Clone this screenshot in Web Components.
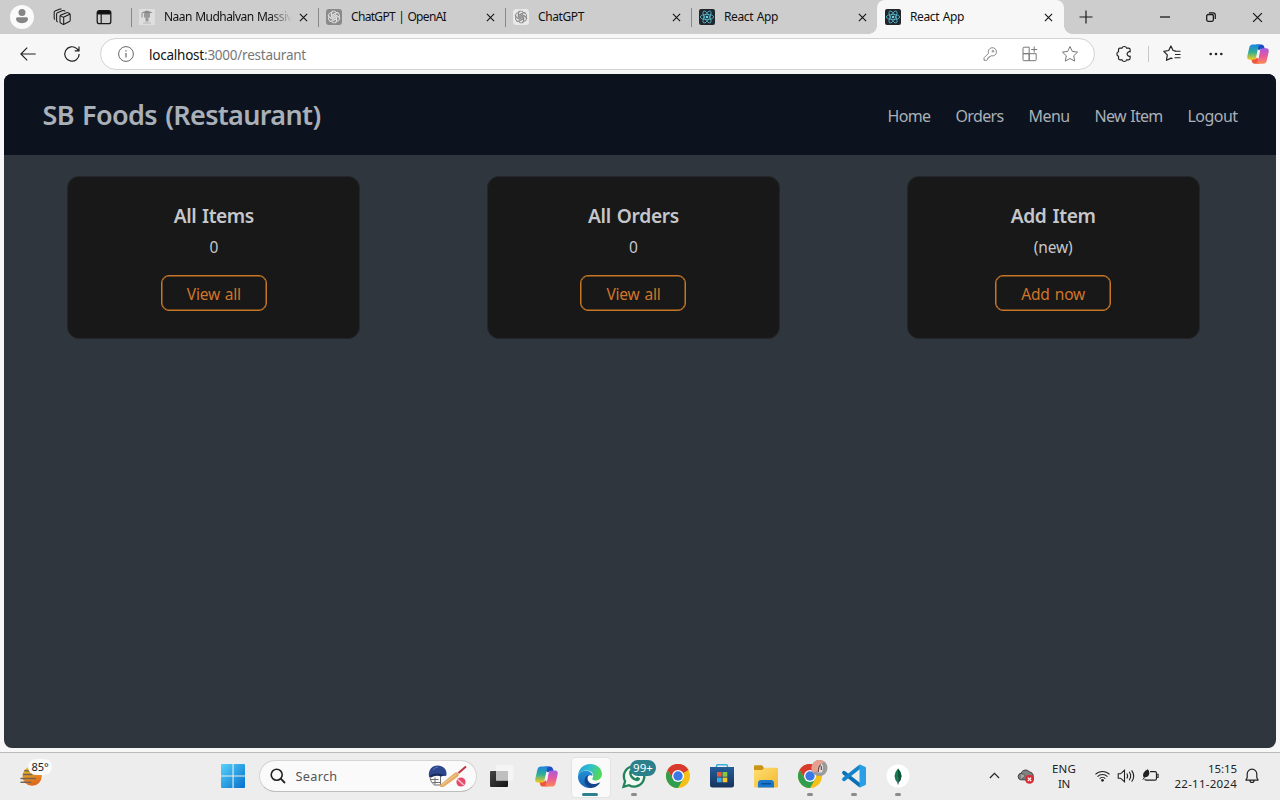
<!DOCTYPE html>
<html lang="en">
<head>
<meta charset="utf-8">
<title>React App</title>
<style>
html,body{margin:0;height:100%;overflow:hidden}
body{font-family:"Noto Sans","Open Sans",sans-serif;color:#1b1b1b;background:#f7f7f7}
</style>
</head>
<body>
<desktop-screen></desktop-screen>
<script>
const define = (name, css, html, after) => customElements.define(name, class extends HTMLElement {
  connectedCallback() {
    if (this.shadowRoot) return;
    const root = this.attachShadow({ mode: 'open' });
    root.innerHTML = `<style>*{box-sizing:border-box}${css}</style>` + (typeof html === 'function' ? html(this) : html);
    if (after) after(this, root);
  }
});

const chromeWheel = `<circle cx="12" cy="12" r="12" fill="#f5c018"/><path d="M12 12 1.6 6A12 12 0 0 1 22.4 6z" fill="#d93a2e"/><path d="M12 6h10.4A12 12 0 0 0 1.6 6L6.8 15z" fill="#d93a2e"/><path d="M1.6 6A12 12 0 0 0 12 24l5.2-9L12 12 6.8 15z" fill="#2f9e4f"/><circle cx="12" cy="12" r="6" fill="#fff"/><circle cx="12" cy="12" r="4.7" fill="#3b78e7"/>`;
const knot = c => `<g fill="none" stroke="${c}" stroke-width=".9">${[0,60,120,180,240,300].map(a=>`<path transform="rotate(${a} 8 8)" d="M5.300 8.600V4.800a2.800 2.800 0 0 1 5-1.600M6.900 9V5.700L10 3.900a2.800 2.800 0 0 1 2.600 0"/>`).join('')}</g>`;
const copilot = `<defs><linearGradient id="ca" x1="0" y1="0" x2="0" y2="1"><stop offset="0" stop-color="#1a86e0"/><stop offset=".5" stop-color="#2fae98"/><stop offset="1" stop-color="#f5cc1c"/></linearGradient><linearGradient id="cb" x1="0" y1="0" x2="0" y2="1"><stop offset="0" stop-color="#a65be0"/><stop offset=".5" stop-color="#e8589c"/><stop offset="1" stop-color="#fb8a55"/></linearGradient></defs>
<path d="M10 1.500h5.500c2 0 2.800 1 3.200 2.500l.8 2.500H16c-1.700 0-2.600 1-3 2.500z" fill="#1d4fc4"/>
<path d="M14 22.500H8.500c-2 0-2.800-1-3.200-2.500l-.8-2.500H8c1.700 0 2.600-1 3-2.500z" fill="#f0563c"/>
<path d="M6.500 1.500h8c-1.300.4-1.900 1.500-2.200 3.200L10 15.300c-.5 2.200-1.600 3-3.600 3H3.200C.9 18.300-.1 16.900.3 14.500L2.500 5C3 2.600 4.200 1.500 6.500 1.500z" fill="url(#ca)"/>
<path d="M17.500 22.500h-8c1.300-.4 1.900-1.500 2.200-3.200L14 8.700c.5-2.200 1.600-3 3.600-3h3.200c2.300 0 3.300 1.400 2.900 3.800L21.500 19c-.5 2.400-1.700 3.500-4 3.500z" fill="url(#cb)"/>
<path d="m13 8.500-1.300 7" stroke="#f7f2f5" stroke-width="2.200" stroke-linecap="round"/>`;
/* name: [viewBox width, viewBox height, markup]; drawn with currentColor strokes unless filled */
const ICONS = {
  profile: [24,24,`<g stroke="none"><circle cx="12" cy="12" r="12" fill="#fafafa"/><circle cx="12" cy="7.500" r="3.500" fill="#858585"/><path d="M6 13.800c0-1 .8-1.600 1.600-1.600h8.800c.8 0 1.600.6 1.600 1.600 0 2.800-2.600 4.400-6 4.400s-6-1.600-6-4.400z" fill="#858585"/></g>`],
  spaces: [18,18,`<path d="M7 8.300q0-1 .9-1.400l5.800-2.200q.9-.3 1.700.2l1 .6q.8.500.8 1.400v5.300q0 .9-.8 1.300l-5.300 2.700q-.8.400-1.600-.1L7.700 15q-.7-.5-.7-1.300zM7.200 7.600l2.900 1.500q.6.400.6 1v6M10.500 9.200l6.200-2.900M4.800 14l-.6-.4q-.6-.4-.6-1.200V6q0-.9.9-1.300l5.300-2.100q.9-.3 1.600.2l.9.600M2 11.500q-.8-.4-.8-1.300V4.300q0-.9.9-1.300L7 1.100q.8-.3 1.500.1" stroke-width="1.050"/>`],
  panel: [16,16,`<rect x="1.200" y="1.600" width="13.600" height="13" rx="2.200" stroke-width="1.300"/><path d="M1.500 5V3.700q0-2 2-2h9q2 0 2 2V5z" fill="#111"/><path d="M5.200 5v9.500" stroke-width="1.200"/>`],
  close: [10,10,`<path d="m1 1 8 8M9 1 1 9" stroke-width="1.200"/>`],
  plus: [14,14,`<path d="M7 .5v13M.5 7h13" stroke-width="1.200"/>`],
  min: [10,10,`<path d="M0 5h10" stroke-width="1.300"/>`],
  restore: [10,10,`<rect x=".7" y="2.500" width="6.700" height="6.800" rx="1.500" stroke-width="1.300"/><path d="M3 .8h4q2.300 0 2.300 2.300V7" stroke-width="1.200"/>`],
  back: [16,14,`<path d="M7.200.7.900 7l6.300 6.300M1 7h14.700" stroke-width="1.200"/>`],
  reload: [16,16,`<path d="M15.200 8A7.200 7.200 0 1 1 12.800 2.600L14.600 4.500M15 .5v4.300h-4.300" stroke-width="1.200"/>`],
  info: [16,16,`<circle cx="8" cy="8" r="7.400"/><path d="M8 7v4.500M8 4.200v1.300" stroke-width="1.200"/>`],
  key: [16,16,`<path d="M6.300 7.200A4.700 4.700 0 1 1 9.300 10L8 11.200H6.800v1.400H5.400V14l-1 1.200H1.200v-2.900z"/><circle cx="11.400" cy="4.900" r="1"/>`],
  apps: [16,16,`<path d="M1 2.200q0-1 1-1h5.200v6.500H1zM1 7.700h6.200v7H2q-1 0-1-1zM7.200 7.700h7v6q0 1-1 1h-6zM12.200.5v6M9.200 3.500h6"/>`],
  star: [18,18,`<path d="m9 1.500 2.300 4.900 5.300.7-3.900 3.700 1 5.300L9 13.500l-4.700 2.600 1-5.300L1.400 7.100l5.300-.7z" stroke-linejoin="round"/>`],
  puzzle: [18,18,`<path d="M7 3.200a2.400 2.400 0 0 1 4.600 0h2q1.500 0 1.500 1.500v2.100a2.300 2.300 0 1 0 0 4.400v2.100q0 1.500-1.500 1.500h-2a2.400 2.400 0 0 1-4.600 0H5q-1.500 0-1.500-1.500v-2.100a2.300 2.300 0 0 1 0-4.400V4.700Q3.500 3.200 5 3.200z" stroke-width="1.200"/>`],
  favs: [18,18,`<path d="M11.500 6.300h6M12 9.500h5.500M11.500 12.700h6" stroke-width="1.100"/><path d="m12.500 5.900-2.400-.4L7.900 1 5.700 5.500l-4.900.8 3.500 3.600-.8 5.400 4.600-2.200 1.400.5" stroke-width="1.200" stroke-linejoin="round"/>`],
  dots: [14,4,`<g fill="#222" stroke="none"><circle cx="1.700" cy="2" r="1.300"/><circle cx="7" cy="2" r="1.300"/><circle cx="12.300" cy="2" r="1.300"/></g>`],
  react: [16,16,`<rect width="16" height="16" rx="2" fill="#20262c" stroke="none"/><g stroke="#56bdd4" stroke-width=".8"><ellipse cx="8" cy="8" rx="6.700" ry="2.600"/><ellipse cx="8" cy="8" rx="6.700" ry="2.600" transform="rotate(60 8 8)"/><ellipse cx="8" cy="8" rx="6.700" ry="2.600" transform="rotate(120 8 8)"/></g><circle cx="8" cy="8" r="1.300" fill="#6fd4e8" stroke="none"/>`],
  gptdark: [16,16,`<rect width="16" height="16" rx="3" fill="#8a8a8a" stroke="none"/>${knot('#e3e3e3')}`],
  gptlight: [16,16,`<rect width="16" height="16" rx="3" fill="#e9e9e9" stroke="none"/>${knot('#858585')}`],
  grad: [16,16,`<rect width="16" height="16" fill="#dedede" stroke="none"/><path d="m2.500 3.500 5.500-2 5.500 2L8 5.300z" fill="#8a8a8a" stroke="none"/><path d="M5 4.500h6v4H9.500v4h-3v-4H5z" fill="#9a9a9a" stroke="none"/><path d="M3 4v4.500" stroke="#8f8f8f"/><path d="M4 14h8" stroke="#b4b4b4"/>`],
  copilot: [24,24,`<g stroke="none">${copilot}</g>`],
  weather: [32,28,`<defs><linearGradient id="w" x1="0" y1="0" x2=".3" y2="1"><stop offset="0" stop-color="#e8c52a"/><stop offset="1" stop-color="#df681c"/></linearGradient></defs><circle cx="12.500" cy="14.500" r="10" fill="url(#w)" stroke="none"/><path d="M4.500 9h8M3 13h10M.5 17h16M.5 21h11" stroke="#746454" stroke-width="1.500"/>`],
  windows: [24,24,`<defs><linearGradient id="g" x1="0" y1="0" x2="1" y2="1"><stop offset="0" stop-color="#55d2fb"/><stop offset="1" stop-color="#0570cc"/></linearGradient></defs><path d="M1 0h10.500v11.500H0V1q0-1 1-1zM12.600 0H23q1 0 1 1v10.500H12.600zM0 12.600h11.500V24H1q-1 0-1-1zM12.600 12.600H24V23q0 1-1 1H12.600z" fill="url(#g)" stroke="none"/>`],
  search: [16,16,`<circle cx="6.700" cy="6.700" r="5.500" stroke-width="1.600"/><path d="m10.700 10.700 4.300 4.300" stroke-width="1.800"/>`],
  cricket: [40,24,`<path d="M2 12q0 6 4.500 9h6v-9M2.500 15.500h8M4.500 18.500h8M7 13.500v7" stroke="#6f6f70" stroke-width="1"/><g stroke="none"><path d="M1 12.500C0 6 4 1.500 9.500 1.500S19 5 18.500 10.500q0 2-2 1.500L8 10.500q-3 0-5 2z" fill="#2d478d"/><path d="M1 12.500q3.500-3.700 9-3l6.500 1.500-3 1.500q-6-2-10.500 1z" fill="#1a2b60"/></g><path d="M5 6q2-3 5-3" stroke="#5d78b6"/><path d="m12.500 20.500 14-11.500q3-1.500 4 .5t-1 3.500l-14 10q-5 .5-3-2.500z" fill="#e5ac66" stroke="none"/><path d="m14 21 14-10.500" stroke="#f4cf98"/><path d="m30.500 9 7.500-6.500" stroke="#bf3342" stroke-width="2"/><circle cx="33" cy="18" r="4.600" fill="#e34b6d" stroke="none"/><path d="m29.800 15.500 6 5.500" stroke="#f6c0cd" stroke-width="1.600"/>`],
  taskview: [24,24,`<defs><linearGradient id="tv" x1="0" y1="0" x2="1" y2="1"><stop offset="0" stop-color="#454545"/><stop offset="1" stop-color="#141414"/></linearGradient></defs><g stroke="none"><rect y="7" width="18" height="16" rx="1" fill="url(#tv)"/><rect x="6" y="1" width="17.500" height="15.500" rx="1" fill="#f5f5f5" opacity=".9"/><path d="M6 7h12v9.500H6z" fill="#bfbfbf"/></g>`],
  edge: [24,24,`<defs><linearGradient id="e1" x1="0" y1="0" x2="1" y2=".35"><stop offset="0" stop-color="#2398d9"/><stop offset=".5" stop-color="#2dbfd0"/><stop offset="1" stop-color="#55d759"/></linearGradient><linearGradient id="e2" x1="0" y1="0" x2="0" y2="1"><stop offset="0" stop-color="#2291d6"/><stop offset="1" stop-color="#1761b7"/></linearGradient></defs><g stroke="none"><path d="M0 11.500C.5 5 5.500 0 12 0c7 0 12 4.800 12 10 0 4-3.200 6.500-6.500 6.500-2.500 0-3.800-1-3-2.200C17 10 13 6.500 8.500 6.500 4.500 6.500 1 8.500 0 11.500z" fill="url(#e1)"/><path d="M0 12C.8 8.500 4.500 6.700 8.300 6.800c4 .1 6.200 2.700 6.200 4.900-3-1.500-6.500.3-6.500 4.200 0 4 3.500 7 7 7.700C8 25.500-.5 20.500 0 12z" fill="url(#e2)"/><path d="M11 10.800c-3.200 3-1 9.700 5.500 9.200 2.500-.2 4-.8 5.800-1.700-1.500 3-5.300 5.700-9.300 5.700-5-1-7.500-5.500-6-9.500.7-2 2.200-3.500 4-3.700z" fill="#12458b"/></g>`],
  whatsapp: [24,24,`<path d="m1.500 22.800 1.600-5.600A10.200 10.200 0 1 1 7 21.200z" stroke="#23835a" stroke-width="2.300" fill="#f3f8f5"/><path d="M7.600 6.500c1-1 2-.5 2.400.6l.5 1.600c.1.600-.8 1.200-1 1.600.9 1.900 2.300 3 4.200 3.900l1.500-1.500 2.600 1.300c.6.400 0 2.200-1.100 2.800-5 2-11.500-5.400-9.100-10.300z" fill="#23835a" stroke="none"/>`],
  chrome: [24,24,`<g stroke="none">${chromeWheel}</g>`],
  chromeuser: [32,28,`<g stroke="none" transform="translate(0 4)">${chromeWheel}</g><g stroke="none"><circle cx="21.500" cy="8" r="8" fill="#9a9a9a"/><path d="M21.500 0a8 8 0 0 0-6.500 12.500l5-1.500 1-5.500 5.500-4q-2-1.500-5-1.500z" fill="#e7a08e"/><path d="M19.500 12.500q-.5-7.500 3.500-9 3.500 2 1 9z" fill="#e5dedd"/></g><path d="M20.300 12q0-6 2.500-7.500M23.300 6v4" stroke="#6b4444" stroke-width="1.200"/>`],
  store: [24,24,`<defs><linearGradient id="st" x1="0" y1="0" x2="0" y2="1"><stop offset="0" stop-color="#235e99"/><stop offset="1" stop-color="#17335c"/></linearGradient></defs><path d="M6.500 4V2q0-1.300 1.300-1.300h8.400q1.300 0 1.300 1.300v2" stroke="#3aaddd" stroke-width="1.500"/><path d="M0 3h24v18q0 2.500-2.500 2.500h-19Q0 23.500 0 21z" fill="url(#st)" stroke="none"/><g stroke="none"><path d="M7 8h4.700v4.700H7z" fill="#ec5736"/><path d="M12.600 8h4.700v4.700h-4.700z" fill="#8dc540"/><path d="M7 13.600h4.700v4.700H7z" fill="#35abea"/><path d="M12.600 13.600h4.700v4.700h-4.700z" fill="#f6c42c"/></g>`],
  folder: [24,24,`<defs><linearGradient id="f" x1="0" y1="0" x2="1" y2="1"><stop offset="0" stop-color="#ffdf70"/><stop offset="1" stop-color="#f1b832"/></linearGradient></defs><g stroke="none"><path d="M0 8V2.500Q0 1.300 1.200 1.300H8l2 2.500V8z" fill="#cc9416"/><path d="M0 6h8l2.500-2.300H23q1 0 1 1V22q0 1.500-1.500 1.500h-21Q0 23.500 0 22z" fill="url(#f)"/><path d="M4 23.500v-4Q4 16 7 16h10q3 0 3 3.500v4z" fill="#1878ce"/><path d="M7 19h10v1.500H7z" fill="#0e4d91"/></g>`],
  vscode: [24,24,`<path d="M2 8.800 17.500 21" stroke="#0a6fb4" stroke-width="3.800" stroke-linecap="round"/><path d="M2 15.200 17.500 3" stroke="#1484c8" stroke-width="3.800" stroke-linecap="round"/><path d="M17.500.2 23 2.800q1 .4 1 1.500v15.400q0 1.100-1 1.500l-5.500 2.600z" fill="#29a0e6" stroke="none"/>`],
  mongo: [24,24,`<g stroke="none"><circle cx="12" cy="12" r="11.500" fill="#fff"/><path d="M12 4.500q7 7.500 0 15-7-7.500 0-15z" fill="#167a4e"/><path d="M12 4.500q7 7.500 0 15z" fill="#0c5739"/></g><path d="M12 13v7.500" stroke="#567"/>`],
  chevron: [12,8,`<path d="m1 6.500 5-5 5 5" stroke-width="1.300"/>`],
  cloud: [18,16,`<path d="M3.800 11.800A3.300 3.300 0 0 1 4 5.300C5.500 1.500 10.500 1 12.500 4c2.500.3 3.700 2 3.700 4v3.800z" fill="#818181" stroke="#3c3c3c"/><path d="M4 5.500q3 0 4.500 2.500l-4 3.500" fill="#a5a5a5" stroke="#555"/><circle cx="12.500" cy="11.300" r="4.500" fill="#d92c35" stroke="none"/><path d="m10.800 9.600 3.400 3.400m0-3.400-3.400 3.400" stroke="#fff" stroke-width="1.200"/>`],
  wifi: [18,14,`<path d="M1.500 5.800a10.500 10.500 0 0 1 15 0M3.700 8a7.500 7.500 0 0 1 10.600 0M6 10.200a4.300 4.300 0 0 1 6 0" stroke-width="1.100"/><circle cx="9" cy="12" r="1.400" fill="#222" stroke="none"/>`],
  sound: [18,14,`<path d="M1.200 4.800h2.300L7.500 1.300v11.400L3.500 9.200H1.200zM9.800 4.500q1.700 2.500 0 5M12.200 2.800q3 4.200 0 8.400M14.600 1.300q4.300 5.700 0 11.400" stroke-width="1.100"/>`],
  battery: [18,14,`<path d="M8.500 2.800h5.300q1.500 0 1.500 1.500v6q0 1.500-1.500 1.500H4.500Q3 11.800 3 10.300M16 5.500h1v3.500h-1" stroke-width="1.200"/><path d="M1.500 8.500Q-.5 4 6 .2q1.900 1 1.700 4.300-.5 5-6.200 4z" fill="#222" stroke="none"/><path d="M.8 11.300 4.500 6"/>`],
  bell: [14,16,`<path d="M7 1.200a4.800 4.800 0 0 1 4.800 4.800v3.500l1.300 2.700H.9l1.300-2.700V6A4.800 4.800 0 0 1 7 1.200zM5 12.500a2 2 0 0 0 4 0" stroke-width="1.200" stroke-linejoin="round"/>`]
};
define('ui-icon', `:host{display:inline-flex;flex:none}svg{display:block;overflow:visible}`, el => {
  const [w, h, body] = ICONS[el.getAttribute('name')];
  const width = +(el.getAttribute('size') || w);
  return `<svg width="${width}" height="${width * h / w}" viewBox="0 0 ${w} ${h}" fill="none" stroke="currentColor">${body}</svg>`;
});

/* A single-line label whose tracking is tuned to occupy a given width. */
define('fit-text', `:host{display:inline-block;white-space:nowrap;flex:none}span{display:inline-block;word-spacing:.07em}`, `<span></span>`, (el, root) => {
  const span = root.querySelector('span'), text = el.getAttribute('text'), goal = +el.getAttribute('w');
  span.textContent = text;
  span.style.letterSpacing = (goal - span.getBoundingClientRect().width) / text.length + 'px';
});

define('browser-tab', `
:host{display:flex;align-items:center;position:relative;height:34px;width:186px;padding:0 9px 0 8px;font-size:12px;color:#111}
:host([wide]){width:188px;padding-right:10px}
:host(:not([active]))::before{content:"";position:absolute;left:0;top:8px;height:19px;width:1px;background:#888}
:host([active]){background:#f7f7f7;border-radius:8px 8px 0 0;width:187px;padding-right:10px;z-index:1}
:host([active])::before,:host([active])::after{content:"";position:absolute;bottom:0;width:8px;height:8px}
:host([active])::before{left:-8px;background:radial-gradient(circle at 0 0,#cdcdcd 7.500px,#f7f7f7 8px)}
:host([active])::after{right:-8px;background:radial-gradient(circle at 8px 0,#cdcdcd 7.500px,#f7f7f7 8px)}
.t{flex:1;margin-left:9px;overflow:hidden;line-height:20px;display:flex}
:host([fade]) .t{-webkit-mask:linear-gradient(90deg,#000 105px,transparent 128px)}
.x{width:12px;display:flex;justify-content:center}`,
  el => `<ui-icon name="${el.getAttribute('icon')}"></ui-icon><div class="t"><fit-text text="${el.getAttribute('label')}" w="${el.getAttribute('w')}"></fit-text></div><span class="x"><ui-icon name="close" size="9"></ui-icon></span>`);

const cell = (w, name, size, extra='') => `<span class="c" style="width:${w}px;${extra}"><ui-icon name="${name}" ${size ? `size="${size}"` : ''}></ui-icon></span>`;
const cellCss = `.c{display:flex;flex:none;justify-content:center;align-items:center;position:relative}`;

define('tab-strip', `:host{display:flex;align-items:center;height:34px;background:#cdcdcd;padding-left:2px}${cellCss}.tabs{display:flex;margin-left:5px}.grow{flex:1}`,
`${cell(40,'profile')}${cell(40,'spaces')}${cell(44,'panel')}
<div class="tabs">
<browser-tab wide icon="grad" label="Naan Mudhalvan Massiv" w="128" fade></browser-tab>
<browser-tab icon="gptdark" label="ChatGPT | OpenAI" w="95" style="margin-left:-1px;width:187px"></browser-tab>
<browser-tab icon="gptlight" label="ChatGPT" w="46"></browser-tab>
<browser-tab icon="react" label="React App" w="54"></browser-tab>
<browser-tab active icon="react" label="React App" w="54"></browser-tab>
</div>
${cell(44,'plus')}<span class="grow"></span>${cell(46,'min')}${cell(46,'restore')}${cell(46,'close',11)}`);

define('address-bar', `:host{display:flex;align-items:center;width:995px;height:32px;margin-left:6px;border:1px solid #d2d2d2;border-radius:16px;background:#fff;font-size:13.500px;color:#777}
b{font-weight:400;color:#111}.u{flex:1;margin-left:6px;display:flex;padding-top:1px}${cellCss}.g{color:#777;display:flex;margin-right:4px}`,
`${cell(34,'info',16,'margin-left:8px;color:#666')}<div class="u"><b><fit-text text="localhost" w="55"></fit-text></b><fit-text text=":3000/restaurant" w="102"></fit-text></div><div class="g">${cell(40,'key',14)}${cell(40,'apps',16)}${cell(40,'star',18)}</div>`);

define('browser-toolbar', `:host{display:flex;align-items:center;height:40px;background:#f7f7f7;padding-left:6px;color:#222}${cellCss}i{width:1px;height:16px;background:#c8c8c8;margin:0 1px 0 2px}`,
`${cell(44,'back')}${cell(44,'reload')}<address-bar></address-bar><span style="width:7px"></span>${cell(44,'puzzle')}<i></i>${cell(44,'favs')}${cell(44,'dots')}${cell(40,'copilot',22)}`);

define('site-nav', `:host{display:flex;align-items:center;justify-content:space-between;height:81px;padding:0 38.500px;background:#0d131e;color:#a9b0b8}
h1{margin:1px 0 0;font-size:27px;font-weight:600;line-height:38px}nav{display:flex;gap:25px;font-size:16px;padding-top:2px}`,
`<h1><fit-text text="SB Foods (Restaurant)" w="278"></fit-text></h1><nav><fit-text text="Home" w="43"></fit-text><fit-text text="Orders" w="48"></fit-text><fit-text text="Menu" w="41"></fit-text><fit-text text="New Item" w="68"></fit-text><fit-text text="Logout" w="50"></fit-text></nav>`);

define('stat-card', `:host{display:flex;flex-direction:column;align-items:center;width:293px;height:163px;border:1px solid #23262a;border-radius:12px;background:#181818;color:#c5c7ca;padding-top:25px}
h2{margin:0;font-size:19.200px;font-weight:600;line-height:28px}p{margin:6px 0 17px;font-size:15.500px;line-height:22px}
button{font:15.500px/32px "Noto Sans",sans-serif;color:#d1752a;border:1px solid #c67626;box-shadow:inset 0 0 0 .5px #c67626;border-radius:8px;background:none;padding:2px 0 0;height:36px}`,
el => `<h2><fit-text text="${el.getAttribute('heading')}" w="${el.getAttribute('hw')}"></fit-text></h2><p><slot></slot></p><button style="width:${el.getAttribute('bw')}px"><fit-text text="${el.getAttribute('action')}" w="${el.getAttribute('aw')}"></fit-text></button>`);

define('restaurant-page', `:host{display:block;height:674px;margin:0 4px;border-radius:8px;overflow:hidden;background:#30363d}
main{display:flex;justify-content:space-around;padding:21px 13px 0 0}`,
`<site-nav></site-nav><main>
<stat-card heading="All Items" hw="80" action="View all" aw="54" bw="106">0</stat-card>
<stat-card heading="All Orders" hw="91" action="View all" aw="54" bw="106">0</stat-card>
<stat-card heading="Add Item" hw="85" action="Add now" aw="64" bw="116"><fit-text text="(new)" w="39"></fit-text></stat-card></main>`);

define('task-button', `:host{display:flex;width:44px;height:47px;align-items:center;justify-content:center;position:relative}
:host([active])::before{content:"";position:absolute;left:3px;top:4px;width:38px;height:39px;border-radius:4px;background:#fafafa;border:1px solid #e3e3e3}
ui-icon{position:relative}
:host([running])::after,:host([active])::after{content:"";position:absolute;bottom:4px;left:19px;width:6px;height:3px;border-radius:2px;background:#8b8b8b}
:host([active])::after{left:14px;width:16px;background:#2b808c}
b{position:absolute;left:18px;top:7px;width:26px;height:16px;border-radius:8px;background:#2b808c;color:#fff;font-size:11.500px;font-weight:400;line-height:15px;text-align:center}`,
el => `<ui-icon name="${el.getAttribute('icon')}" size="${el.getAttribute('size') || 24}" style="${el.getAttribute('shift') || ''}"></ui-icon>${el.hasAttribute('badge') ? `<b><fit-text text="${el.getAttribute('badge')}" w="20"></fit-text></b>` : ''}`);

define('search-box', `:host{display:flex;align-items:center;width:218px;height:32px;border:1px solid #d5d5d5;border-bottom-color:#bdbdbd;border-radius:16px;background:#fafafa;padding:0 8px 0 10px;font-size:12.700px;color:#555;margin:0 3px 0 4px}span{flex:1;margin-left:9.500px}`,
`<ui-icon name="search" style="color:#222"></ui-icon><span><fit-text text="Search" w="42"></fit-text></span><ui-icon name="cricket"></ui-icon>`);

define('weather-widget', `:host{display:block;position:relative;width:211px;height:100%;padding:9px 0 0 20px}b{position:absolute;left:28px;top:6px;width:24px;height:16px;border-radius:8px;background:#fafafa;font-size:11px;font-weight:400;line-height:15px;text-align:center;color:#222}`,
`<ui-icon name="weather" size="31"></ui-icon><b><fit-text text="85°" w="17"></fit-text></b>`);

define('system-tray', `:host{display:flex;align-items:center;margin-left:auto;color:#222;font-size:11.500px}${cellCss}.lang{width:44px;text-align:center;line-height:15px}.clock{width:75px;text-align:right;line-height:15px}`,
`${cell(32,'chevron',11)}${cell(32,'cloud',18)}<div class="lang"><fit-text text="ENG" w="24"></fit-text><br><fit-text text="IN" w="12"></fit-text></div>${cell(32,'wifi',17,'margin-right:-4px')}${cell(24,'sound',18)}${cell(24,'battery',17)}<div class="clock"><fit-text text="15:15" w="29"></fit-text><br><fit-text text="22-11-2024" w="62.5"></fit-text></div>${cell(30,'bell',14,'margin-right:13px')}`);

define('task-bar', `:host{display:flex;align-items:center;height:48px;margin-top:4px;border-top:1px solid #bbb;padding-bottom:1px;box-sizing:border-box;background:#ededed}`,
`<weather-widget></weather-widget><task-button icon="windows"></task-button><search-box></search-box>
<task-button icon="taskview"></task-button><task-button icon="copilot" size="23"></task-button><task-button active icon="edge"></task-button>
<task-button running icon="whatsapp" badge="99+"></task-button><task-button icon="chrome"></task-button><task-button icon="store"></task-button>
<task-button icon="folder"></task-button><task-button running icon="chromeuser" size="32" shift="left:4px;top:-2px"></task-button><task-button running icon="vscode"></task-button><task-button running icon="mongo"></task-button>
<system-tray></system-tray>`);

define('desktop-screen', `:host{display:flex;flex-direction:column;width:1280px;height:800px;overflow:hidden;background:#f7f7f7}task-bar{flex:none}`,
`<tab-strip></tab-strip><browser-toolbar></browser-toolbar><restaurant-page></restaurant-page><task-bar></task-bar>`);
</script>
</body>
</html>
